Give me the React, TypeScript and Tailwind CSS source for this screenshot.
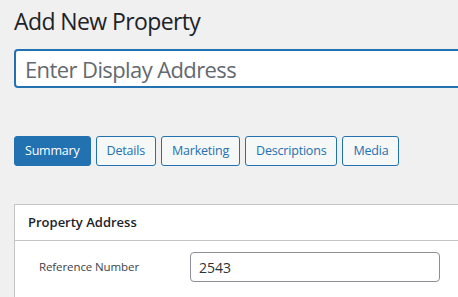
import { useState } from 'react';

export default function App() {
  const [activeTab, setActiveTab] = useState('summary');
  const [address, setAddress] = useState('');
  const [reference, setReference] = useState('2543');

  const tabs = [
    { id: 'summary', name: 'Summary' },
    { id: 'details', name: 'Details' },
    { id: 'marketing', name: 'Marketing' },
    { id: 'descriptions', name: 'Descriptions' },
    { id: 'media', name: 'Media' },
  ];

  return (
    <div
      className="h-[297px] w-[458px] overflow-clip bg-[#f0f0f1] text-[#1d2327]"
      style={{ fontFamily: '"Segoe UI", "Open Sans", sans-serif' }}
    >
      <div className="ml-[14px] w-[500px]">
        {/* Title */}
        <h1 className="pt-[7px] text-[23px] leading-[29px] font-normal tracking-[-0.6px]">Add New Property</h1>

        {/* Display address */}
        <div className="mt-[13px] w-[480px]">
          <input
            autoFocus
            value={address}
            onChange={(e) => setAddress(e.target.value)}
            placeholder="Enter Display Address"
            className="h-[39px] w-full rounded-[4px] border-2 border-[#2271b1] bg-white px-[9px] text-[22px] leading-[35px] tracking-[-0.6px] text-[#1d2327] placeholder:text-[#646970] outline-none"
          />
        </div>

        {/* Tabs */}
        <div className="mt-[48px] flex gap-[5px]">
          {tabs.map((tab) => (
            <button
              key={tab.id}
              onClick={() => setActiveTab(tab.id)}
              className={`h-[30px] rounded-[3px] border px-[10px] text-[12.5px] leading-[28px] tracking-[-0.2px] ${
                activeTab === tab.id
                  ? 'border-[#2271b1] bg-[#2271b1] text-white'
                  : 'border-[#2271b1] bg-[#f6f7f7] text-[#2271b1]'
              }`}
            >
              {tab.name}
            </button>
          ))}
        </div>

        {/* Panel */}
        <div className="mt-[38px] border border-[#c3c4c7] bg-white">
          <div className="flex h-[36px] items-center border-b border-[#c3c4c7] px-[13px]">
            <h2 className="text-[13px] font-semibold">Property Address</h2>
          </div>
          <div className="flex items-center px-[24px] pt-[11px] pb-[20px]">
            <label className="w-[151px] text-[11.5px] tracking-[-0.1px] text-[#3c434a]">Reference Number</label>
            <input
              value={reference}
              onChange={(e) => setReference(e.target.value)}
              className="h-[30px] w-[250px] rounded-[4px] border border-[#8c8f94] bg-white px-[8px] text-[14px] text-[#2c3338] outline-none"
            />
          </div>
        </div>
      </div>
    </div>
  );
}
